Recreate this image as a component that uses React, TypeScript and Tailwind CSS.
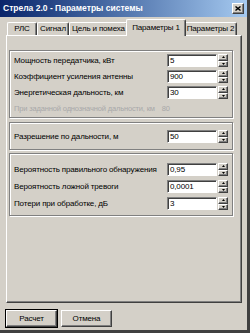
import React from 'react';

const raised =
  'border border-t-white border-l-white border-r-[#404040] border-b-[#404040] shadow-[inset_-1px_-1px_#808080]';
const sunken =
  'border border-t-[#808080] border-l-[#808080] border-r-white border-b-white shadow-[inset_1px_1px_#404040]';
const etched = 'border border-[#808080] shadow-[inset_1px_1px_#ffffff,1px_1px_#ffffff]';

const Arrow = ({ up }: { up?: boolean }) => (
  <svg width="3" height="2" viewBox="0 0 3 2">
    <path d={up ? 'M1.5 0L3 2H0Z' : 'M0 0H3L1.5 2Z'} fill="#000" />
  </svg>
);

const Spinner = () => (
  <div className="flex flex-col w-[10px] h-[13px] ml-[1px]">
    <div className={`${raised} bg-[#d4d0c8] h-[6.5px] flex items-center justify-center`}>
      <Arrow up />
    </div>
    <div className={`${raised} bg-[#d4d0c8] h-[6.5px] flex items-center justify-center`}>
      <Arrow />
    </div>
  </div>
);

const Row = ({ label, value }: { label: string; value: string }) => (
  <div className="flex items-center h-[13px]">
    <span className="flex-1 pl-[4px] whitespace-nowrap">{label}</span>
    <div className={`${sunken} bg-white w-[50px] h-[13px] pl-[2px] leading-[11px]`}>{value}</div>
    <Spinner />
  </div>
);

const Tab = ({ label, w, active }: { label: string; w: string; active?: boolean }) => (
  <div
    className={`${w} ${
      active ? 'h-[17px] -mx-[2px] -mb-[1px] z-10 pt-[3px]' : 'h-[13px] pt-[1px]'
    } relative bg-[#d4d0c8] border-t border-l border-r border-t-white border-l-white border-r-[#404040] rounded-t-[2px] shadow-[inset_-1px_0_#808080] text-center leading-[10px] whitespace-nowrap`}
  >
    {label}
  </div>
);

const Button = ({ label, primary }: { label: string; primary?: boolean }) => (
  <div
    className={`w-[51px] h-[17px] flex items-center justify-center ${
      primary ? 'outline outline-1 outline-black' : ''
    } ${raised}`}
  >
    {label}
  </div>
);

export default function App() {
  return (
    <div className="w-[250px] h-[333px] bg-[#d4d0c8] text-[8px] tracking-[-0.15px] text-black font-['Liberation_Sans',Arial,sans-serif] border-r-[3px] border-r-[#404040] border-b-[3px] border-b-[#404040] overflow-hidden flex flex-col">
      <div className="h-[17px] flex items-center justify-between pl-[3px] pr-[3px] bg-gradient-to-r from-[#0a246a] to-[#a6caf0]">
        <span className="text-white font-bold text-[8.5px] tracking-normal whitespace-nowrap">Стрела 2.0 - Параметры системы</span>
        <div className={`${raised} bg-[#d4d0c8] w-[12px] h-[11px] flex items-center justify-center`}>
          <svg width="6" height="5" viewBox="0 0 6 5">
            <path d="M0.5 0.5L5.5 4.5M5.5 0.5L0.5 4.5" stroke="#000" strokeWidth="1.4" />
          </svg>
        </div>
      </div>

      <div className="h-[18px] flex items-end pl-[7px]">
        <Tab label="РЛС" w="w-[30px]" />
        <Tab label="Сигнал" w="w-[32px]" />
        <Tab label="Цель и помеха" w="w-[59px]" />
        <Tab label="Параметры 1" w="w-[60px]" active />
        <Tab label="Параметры 2" w="w-[53px]" />
      </div>

      <div className={`${raised} ml-[6px] w-[236px] h-[268px] pl-[2px] pr-[8px] pt-[14px] flex flex-col`}>
        <div className={`${etched} h-[68px] pt-[3px] pr-[4px] flex flex-col gap-[3px]`}>
          <Row label="Мощность передатчика, кВт" value="5" />
          <Row label="Коэффициент усиления антенны" value="900" />
          <Row label="Энергетическая дальность, км" value="30" />
          <div className="flex items-center gap-[7px] h-[13px] pl-[4px] text-[#a8a8a8] text-[7.5px] whitespace-nowrap">
            <span>При заданной однозначной дальности, км</span>
            <span>80</span>
          </div>
        </div>
        <div className={`${etched} mt-[4px] h-[28px] pt-[7px] pr-[4px]`}>
          <Row label="Разрешение по дальности, м" value="50" />
        </div>
        <div className={`${etched} mt-[3px] h-[63px] pt-[9px] pr-[4px] flex flex-col gap-[4px]`}>
          <Row label="Вероятность правильного обнаружения" value="0,95" />
          <Row label="Вероятность ложной тревоги" value="0,0001" />
          <Row label="Потери при обработке, дБ" value="3" />
        </div>
      </div>

      <div className="flex gap-[4px] pl-[6px] mt-[7px]">
        <Button label="Расчет" primary />
        <Button label="Отмена" />
      </div>
    </div>
  );
}
